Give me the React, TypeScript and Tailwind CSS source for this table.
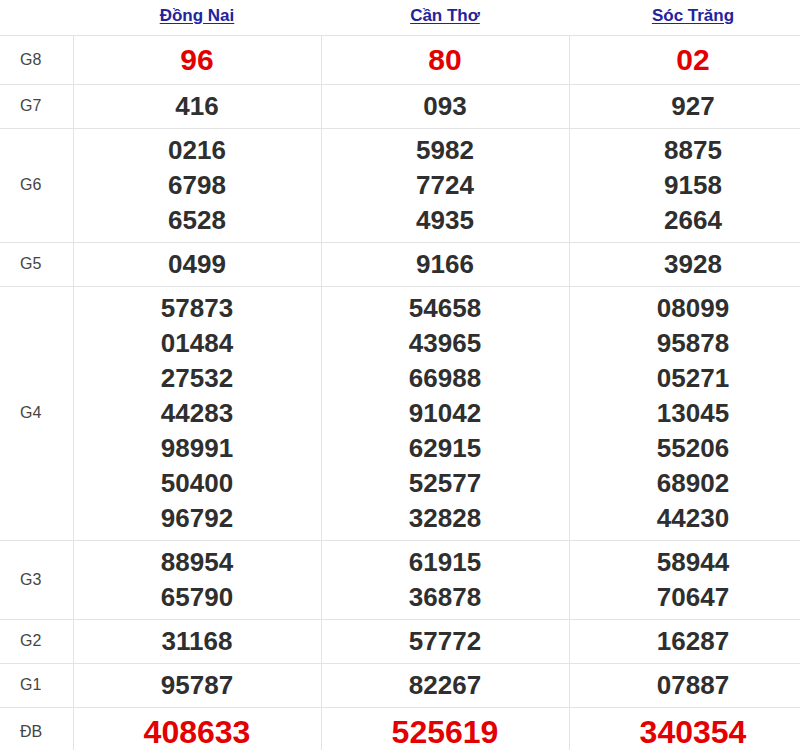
import React from 'react';

type Row = { label: string; values: string[][]; kind?: 'g8' | 'db' };

const provinces = ['Đồng Nai', 'Cần Thơ', 'Sóc Trăng'];

const rows: Row[] = [
    { label: 'G8', kind: 'g8', values: [['96'], ['80'], ['02']] },
    { label: 'G7', values: [['416'], ['093'], ['927']] },
    {
        label: 'G6',
        values: [
            ['0216', '6798', '6528'],
            ['5982', '7724', '4935'],
            ['8875', '9158', '2664'],
        ],
    },
    { label: 'G5', values: [['0499'], ['9166'], ['3928']] },
    {
        label: 'G4',
        values: [
            ['57873', '01484', '27532', '44283', '98991', '50400', '96792'],
            ['54658', '43965', '66988', '91042', '62915', '52577', '32828'],
            ['08099', '95878', '05271', '13045', '55206', '68902', '44230'],
        ],
    },
    {
        label: 'G3',
        values: [
            ['88954', '65790'],
            ['61915', '36878'],
            ['58944', '70647'],
        ],
    },
    { label: 'G2', values: [['31168'], ['57772'], ['16287']] },
    { label: 'G1', values: [['95787'], ['82267'], ['07887']] },
    { label: 'ĐB', kind: 'db', values: [['408633'], ['525619'], ['340354']] },
];

const numberClass = (kind?: 'g8' | 'db') => {
    if (kind === 'g8') return 'text-[30px] leading-[40px] text-[#e30000]';
    if (kind === 'db') return 'text-[32px] leading-[40px] text-[#e30000]';
    return 'text-[26px] leading-[35px] text-[#2f2f2f]';
};

export default function App() {
    return (
        <div className="w-[800px] h-[750px] overflow-hidden bg-white font-['Liberation_Sans',Arial,sans-serif]">
            <table className="w-[817px] table-fixed border-collapse">
                <colgroup>
                    <col className="w-[73px]" />
                    <col className="w-[248px]" />
                    <col className="w-[248px]" />
                    <col className="w-[248px]" />
                </colgroup>
                <thead>
                    <tr className="h-[35px] border-b border-[#e3e3e3]">
                        <th />
                        {provinces.map(p => (
                            <th key={p} className="text-center align-middle pb-[3px]">
                                <a href="#" className="text-[17px] font-bold text-[#23239e] underline underline-offset-2">
                                    {p}
                                </a>
                            </th>
                        ))}
                    </tr>
                </thead>
                <tbody>
                    {rows.map(row => (
                        <tr key={row.label} className="border-b border-[#e3e3e3]">
                            <td className="border-r border-[#e3e3e3] pl-[20px] align-middle text-[16px] text-[#454545]">
                                {row.label}
                            </td>
                            {row.values.map((vals, i) => (
                                <td key={i} className="border-r border-[#e3e3e3] py-1 text-center align-middle">
                                    {vals.map(v => (
                                        <div key={v} className={`font-bold ${numberClass(row.kind)}`}>
                                            {v}
                                        </div>
                                    ))}
                                </td>
                            ))}
                        </tr>
                    ))}
                </tbody>
            </table>
        </div>
    );
}
